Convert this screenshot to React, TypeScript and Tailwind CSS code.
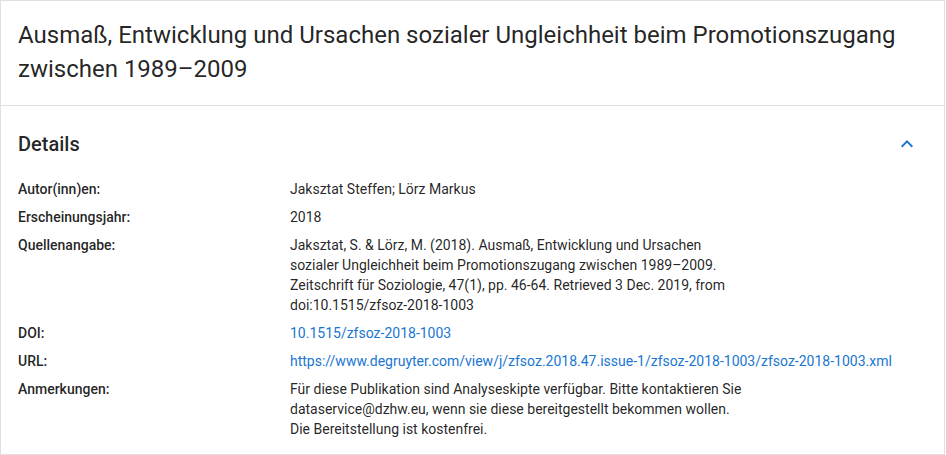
const rows: { label: string; value: React.ReactNode }[] = [
  { label: "Autor(inn)en:", value: "Jaksztat Steffen; Lörz Markus" },
  { label: "Erscheinungsjahr:", value: "2018" },
  {
    label: "Quellenangabe:",
    value: (
      <p className="max-w-[455px]">
        Jaksztat, S. &amp; Lörz, M. (2018). Ausmaß, Entwicklung und Ursachen sozialer Ungleichheit beim
        Promotionszugang zwischen 1989–2009. Zeitschrift für Soziologie, 47(1), pp. 46-64. Retrieved 3 Dec.
        2019, from doi:10.1515/zfsoz-2018-1003
      </p>
    ),
  },
  {
    label: "DOI:",
    value: (
      <a href="#" className="text-[#1976d2]">
        10.1515/zfsoz-2018-1003
      </a>
    ),
  },
  {
    label: "URL:",
    value: (
      <a href="#" className="text-[#1976d2] whitespace-nowrap">
        https://www.degruyter.com/view/j/zfsoz.2018.47.issue-1/zfsoz-2018-1003/zfsoz-2018-1003.xml
      </a>
    ),
  },
  {
    label: "Anmerkungen:",
    value: (
      <p className="max-w-[455px]">
        Für diese Publikation sind Analyseskipte verfügbar. Bitte kontaktieren Sie dataservice@dzhw.eu, wenn
        sie diese bereitgestellt bekommen wollen.
        <br />
        Die Bereitstellung ist kostenfrei.
      </p>
    ),
  },
];

const App = () => {
  return (
    <div className="w-[946px] h-[455px] bg-white font-['Roboto',sans-serif] text-[rgba(0,0,0,0.87)]">
      <div className="w-[945px] h-[455px] border border-[#e0e0e0] bg-white">
        {/* Title */}
        <div className="px-[17px] pt-[17px] pb-[19px] border-b border-[#e0e0e0]">
          <h1 className="text-[24px] leading-[34px] font-normal">
            Ausmaß, Entwicklung und Ursachen sozialer Ungleichheit beim Promotionszugang zwischen 1989–2009
          </h1>
        </div>

        {/* Details */}
        <div className="px-[17px] pt-[22px]">
          <div className="flex items-center justify-between h-[32px]">
            <h2 className="text-[20px] leading-[32px] font-medium">Details</h2>
            <svg width="24" height="24" viewBox="0 0 24 24" className="mr-[8px] text-[#1976d2]">
              <path d="M7.41 15.41 12 10.83l4.59 4.58L18 14l-6-6-6 6z" fill="currentColor" />
            </svg>
          </div>

          <div className="mt-[19px] flex flex-col gap-[8px] text-[14px] leading-[20px]">
            {rows.map((row) => (
              <div key={row.label} className="flex">
                <div className="w-[272px] shrink-0 font-medium">{row.label}</div>
                <div className="flex-1">{row.value}</div>
              </div>
            ))}
          </div>
        </div>
      </div>
    </div>
  );
};

export default App;
